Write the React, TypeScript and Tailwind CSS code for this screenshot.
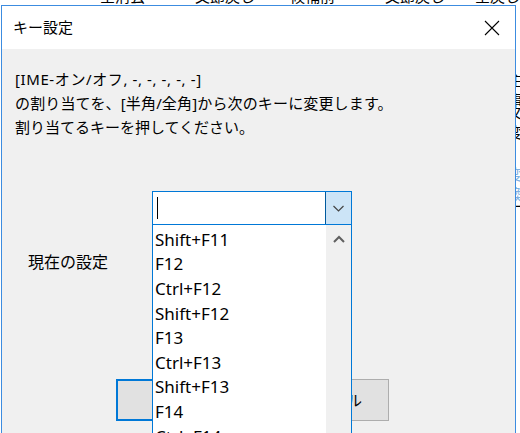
const items = [
  "Shift+F11",
  "F12",
  "Ctrl+F12",
  "Shift+F12",
  "F13",
  "Ctrl+F13",
  "Shift+F13",
  "F14",
  "Ctrl+F14",
];

// glimpses of the window sitting behind the dialog
const headers = [
  { x: "left-[100px]", t: "全消去" },
  { x: "left-[195px]", t: "文節戻し" },
  { x: "left-[290px]", t: "候補前" },
  { x: "left-[385px]", t: "文節戻し" },
  { x: "left-[475px]", t: "全戻し" },
];

export default function App() {
  return (
    <div className="relative w-[520px] h-[433px] overflow-hidden bg-white text-black font-['Noto_Sans','Noto_Sans_CJK_JP',sans-serif]">
      {headers.map((h) => (
        <span key={h.x} className={`absolute top-[-14px] ${h.x} text-[15px] leading-[20px] whitespace-nowrap`}>
          {h.t}
        </span>
      ))}
      <span className="absolute top-[70px] left-[508px] text-[15px] leading-[20px]">主事</span>
      <span className="absolute top-[102px] left-[508px] text-[15px] leading-[20px]">文変</span>
      <span className="absolute top-[164px] left-[508px] text-[15px] leading-[20px] text-[#7fb0e0]">変換</span>
      <span className="absolute top-[196px] left-[508px] text-[15px] leading-[20px]">ー</span>

      {/* dialog */}
      <div className="relative z-10 mt-[5px] ml-[1px] w-[515px] h-[460px] border border-[#3c8ce0] bg-[#f0f0f0]">
        <div className="h-[43px] bg-white flex items-center justify-between pl-[11px] pr-[15px]">
          <span className="text-[15px] leading-none">キー設定</span>
          <svg width="16" height="16" viewBox="0 0 16 16" className="text-black">
            <path d="M1 1 L15 15 M15 1 L1 15" stroke="currentColor" strokeWidth="1.1" fill="none" />
          </svg>
        </div>

        <div className="pl-[13px] pt-[18px] text-[15px] leading-[24px]">
          <div className="tracking-[0.6px]">[IME-オン/オフ, -, -, -, -, -]</div>
          <div className="tracking-[0.15px]">の割り当てを、[半角/全角]から次のキーに変更します。</div>
          <div>割り当てるキーを押してください。</div>

          {/* combo with open list */}
          <div className="relative mt-[52px] ml-[137px] w-[200px]">
            <div className="h-[34px] border border-[#0078d7] bg-white flex items-center">
              <div className="ml-[4px] w-px h-[22px] bg-black" />
              <div className="ml-auto h-full w-[26px] bg-[#cce4f7] border-l border-[#005a9e] flex items-center justify-center">
                <svg width="11" height="7" viewBox="0 0 11 7">
                  <path d="M0.5 1 L5.5 6 L10.5 1" stroke="#444" strokeWidth="1.2" fill="none" />
                </svg>
              </div>
            </div>
            <div className="absolute left-0 top-full w-[200px] h-[240px] bg-white border-x border-[#0078d7] flex">
              <div className="flex-1 pt-[2.5px] pl-[2px]">
                {items.map((it) => (
                  <div key={it} className="h-[24.6px] flex items-center text-[17px] whitespace-nowrap">
                    {it}
                  </div>
                ))}
              </div>
              <div className="w-[25px] bg-[#f0f0f0] flex justify-center pt-[10px]">
                <svg width="12" height="8" viewBox="0 0 12 8">
                  <path d="M1 7 L6 2 L11 7" stroke="#606060" strokeWidth="2" fill="none" />
                </svg>
              </div>
            </div>
          </div>

          <div className="mt-[25px] ml-[13px] text-[16px] leading-[24px]">現在の設定</div>

          <div className="mt-[105px] ml-[101px] flex gap-[15px]">
            <div className="w-[129px] h-[42px] border-2 border-[#0078d7] bg-[#e1e1e1] flex items-center justify-center">
              OK
            </div>
            <div className="w-[129px] h-[42px] border border-[#adadad] bg-[#e1e1e1] flex items-center justify-center">
              キャンセル
            </div>
          </div>
        </div>
      </div>
    </div>
  );
}
